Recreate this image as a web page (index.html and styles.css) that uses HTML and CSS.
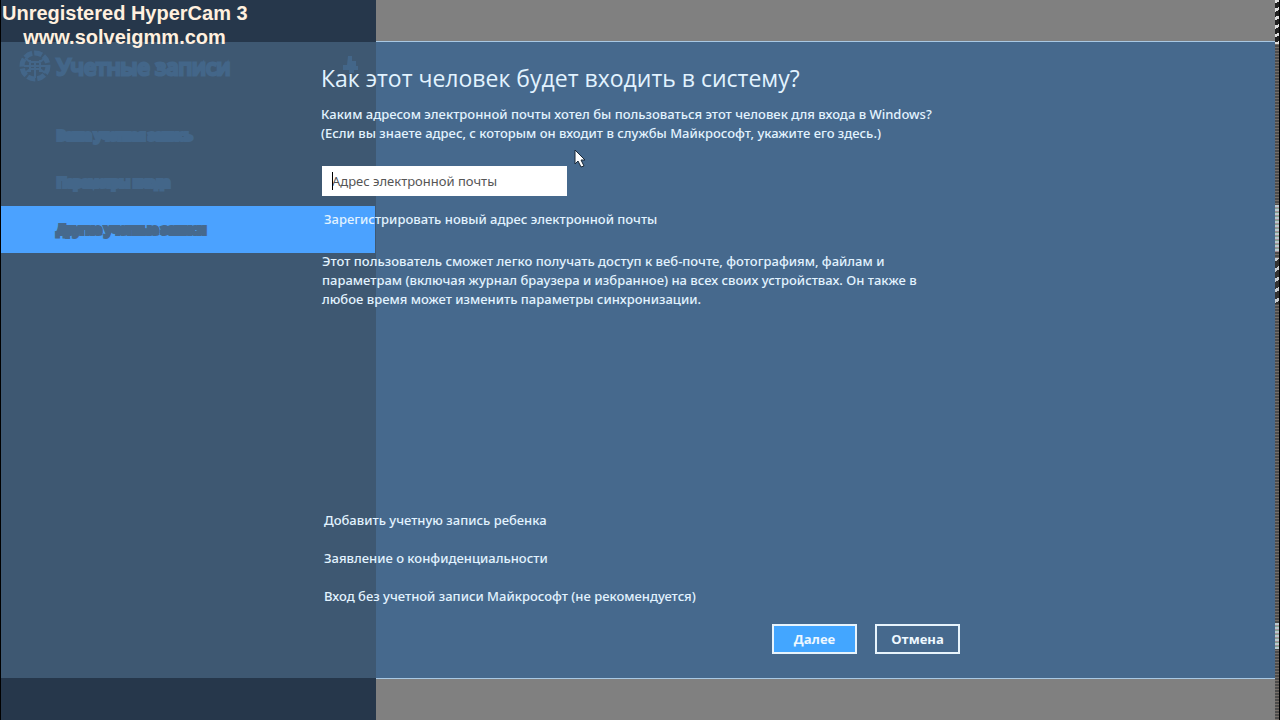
FILE: index.html
```html
<!DOCTYPE html>
<html lang="ru">
<head>
<meta charset="utf-8">
<title>Как этот человек будет входить в систему?</title>
<link rel="stylesheet" href="styles.css">
</head>
<body>
<div class="screen">
  <nav class="sidebar">
    <p class="watermark">Unregistered HyperCam 3<br>www.solveigmm.com</p>
    <div class="shade">
      <div class="sidebar-head">
        <svg class="gear" viewBox="0 0 32 34" aria-hidden="true">
          <circle cx="16" cy="17" r="13" fill="none" stroke="currentColor" stroke-width="5" stroke-dasharray="8 2"/>
          <path d="M6 9l5 4h10l5-4M16 13v16M5 17h22M6 24l5-4h10l5 4M11 11v12M21 11v12" fill="none" stroke="currentColor" stroke-width="2"/>
        </svg>
        <span class="sidebar-title">Учетные записи</span>
        <svg class="search" viewBox="0 0 16 24" aria-hidden="true"><path d="M6 2h4v5h4v5h2v4h-4v3H7v-3H1v-5h4z" fill="currentColor"/></svg>
      </div>
      <a class="item" href="#">Ваша учетная запись</a>
      <a class="item" href="#">Параметры входа</a>
      <a class="item selected" href="#">Другие учетные записи</a>
    </div>
  </nav>
  <div class="pane"></div>
  <main class="dialog">
    <form class="form">
      <h1 class="title">Как этот человек будет входить в систему?</h1>
      <p class="intro"><label for="email">Каким адресом электронной почты хотел бы пользоваться этот человек для входа в Windows?<br>(Если вы знаете адрес, с которым он входит в службы Майкрософт, укажите его здесь.)</label></p>
      <div class="field">
        <input class="email" id="email" type="email" placeholder="Адрес электронной почты">
        <span class="caret"></span>
      </div>
      <a class="link" href="#">Зарегистрировать новый адрес электронной почты</a>
      <p class="note">Этот пользователь сможет легко получать доступ к веб-почте, фотографиям, файлам и<br>параметрам (включая журнал браузера и избранное) на всех своих устройствах. Он также в<br>любое время может изменить параметры синхронизации.</p>
      <div class="links">
        <a class="link" href="#">Добавить учетную запись ребенка</a>
        <a class="link" href="#">Заявление о конфиденциальности</a>
        <a class="link" href="#">Вход без учетной записи Майкрософт (не рекомендуется)</a>
      </div>
      <div class="actions">
        <button class="button primary" type="button">Далее</button>
        <button class="button" type="button">Отмена</button>
      </div>
    </form>
  </main>
  <div class="edge">
    <i class="noise glyphs"></i><i class="noise lines"></i><i class="noise marks"></i><i class="noise lines low"></i>
  </div>
  <svg class="cursor" viewBox="0 0 12 19" aria-hidden="true"><path d="M1 1v14l3-3 3 6 3-1-3-6h4z" fill="#fff" stroke="#182838" stroke-width="1"/></svg>
</div>
</body>
</html>
```
FILE: styles.css
```css
* { box-sizing: border-box; }
body {
  margin: 0;
  background: #808080;
  color: #e2f3ff;
  font: 500 13px/19px "Noto Sans", "Open Sans", sans-serif;
}
h1, p { margin: 0; }
a { color: inherit; text-decoration: none; }
.screen {
  position: relative;
  display: grid;
  grid-template-columns: 375px 1fr 5px;
  grid-template-rows: 41px 1fr 41px;
  min-height: 100vh;
  border-left: 1px solid #000;
  overflow: hidden;
}
.sidebar {
  grid-area: 1 / 1 / 4 / 2;
  display: grid;
  grid-template-rows: 42px 1fr 42px;
  background: #26374b;
}
.watermark {
  grid-area: 1 / 1;
  z-index: 1;
  width: 246px;
  padding: 1px 0 0 1px;
  color: #fff0df;
  font: bold 20px/24px "Liberation Sans", Arial, sans-serif;
  text-align: center;
  white-space: nowrap;
}
.shade {
  grid-area: 2 / 1;
  background: #3e5872;
  color: #436689;
  font-family: "Open Sans", "Noto Sans", sans-serif;
}
.sidebar-head {
  display: flex;
  align-items: center;
  height: 48px;
  padding: 0 18px;
}
.gear { width: 32px; height: 34px; }
.search { width: 16px; height: 24px; margin-left: auto; }
.sidebar-title {
  margin-left: 6px;
  font-size: 22px;
  font-weight: 400;
  line-height: 30px;
  -webkit-text-stroke: 3px currentColor;
}
.item {
  display: block;
  height: 47px;
  padding-left: 56px;
  font-size: 13px;
  font-weight: 400;
  line-height: 46px;
  -webkit-text-stroke: 4px currentColor;
}
.sidebar-head + .item { margin-top: 22px; }
.selected {
  margin-right: 1px;
  background: #4ba2ff;
  color: #46698d;
}
.pane {
  grid-area: 2 / 2;
  background: #46698d;
  border: solid #a9c8e3;
  border-width: 1px 0;
}
.dialog {
  grid-area: 2 / 1 / 3 / 3;
  z-index: 1;
  padding: 20px 40px 25px 320px;
}
.form {
  display: flex;
  flex-direction: column;
  align-items: flex-start;
  height: 100%;
  max-width: 639px;
  white-space: nowrap;
}
.title { font: 400 23px/34px "Open Sans", "Noto Sans", sans-serif; }
.intro { margin-top: 10px; }
.field { position: relative; margin: 23px 0 14px 1px; }
.email {
  display: block;
  width: 245px;
  height: 30px;
  padding: 0 10px;
  border: 0;
  border-radius: 0;
  background: #fff;
  font: inherit;
  font-weight: 400;
}
.email::placeholder { color: #555; opacity: 1; }
.caret {
  position: absolute;
  left: 10px;
  top: 6px;
  width: 1px;
  height: 18px;
  background: #000;
}
.link { margin-left: 3px; }
.note { margin: 23px 0 0 1px; }
.links {
  display: flex;
  flex-direction: column;
  gap: 19px;
  margin-top: auto;
}
.actions {
  display: flex;
  gap: 18px;
  margin-top: 18px;
  align-self: flex-end;
}
.button {
  width: 85px;
  height: 30px;
  padding: 0;
  border: 2px solid #e8f4fc;
  border-radius: 0;
  background: transparent;
  color: #eef8ff;
  font: 700 13px/20px "Open Sans", "Noto Sans", sans-serif;
}
.primary { background: #43a6ff; }
.edge {
  grid-area: 1 / 3 / 4 / 4;
  display: flex;
  flex-direction: column;
  border-right: 1px solid #000;
  background: repeating-linear-gradient(#4c4c4c 0 2px, #77706a 2px 3px);
}
.noise { display: block; }
.glyphs { height: 44px; background: repeating-linear-gradient(160deg, #ddd 0 3px, #222 3px 8px); }
.lines { height: 47px; margin-top: 161px; background: repeating-linear-gradient(#b9c9d0 0 2px, #a38e96 2px 3px, #7fa08d 3px 4px); }
.marks { height: 46px; margin-top: 6px; background: repeating-linear-gradient(150deg, #c5cbd0 0 3px, #333 3px 9px); }
.low { height: 26px; margin-top: 319px; }
.cursor {
  position: absolute;
  left: 573px;
  top: 149px;
  z-index: 2;
  width: 12px;
  height: 19px;
}
```
